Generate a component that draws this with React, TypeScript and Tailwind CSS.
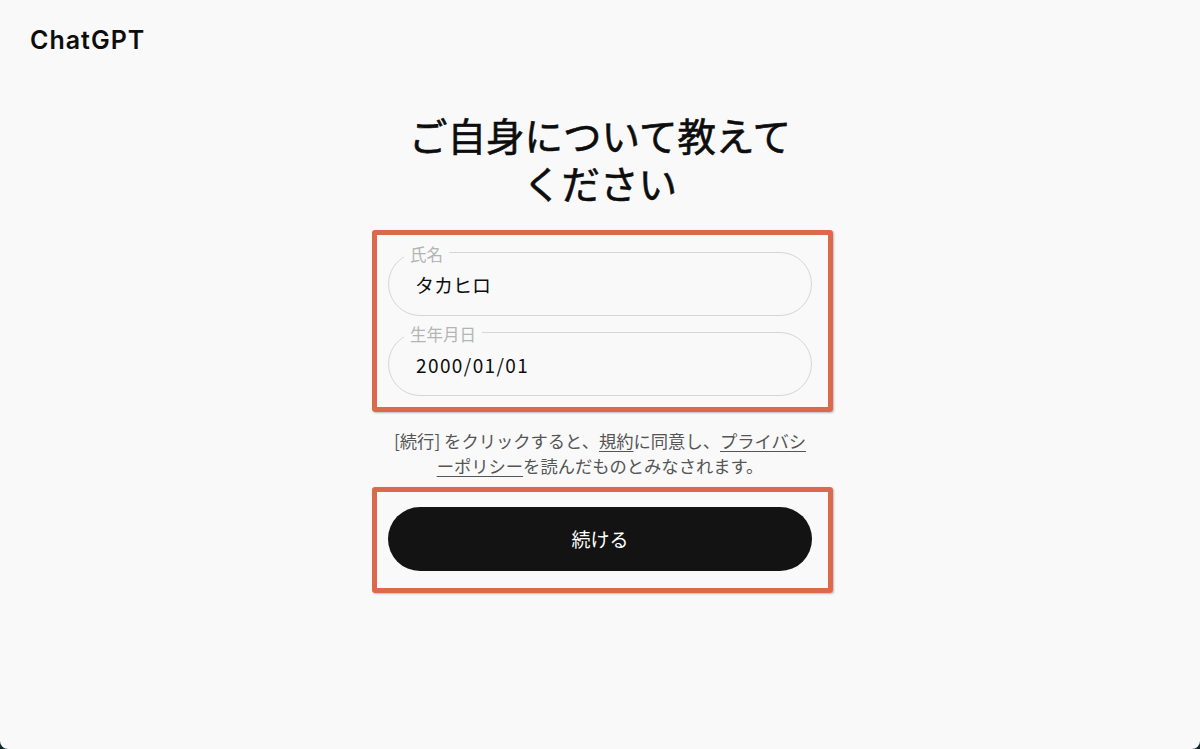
import React from "react";

const jp = { fontFamily: '"Noto Sans CJK JP", "Noto Sans", sans-serif' };

function Field({ label, value, track }: { label: string; value: string; track?: boolean }) {
  return (
    <div className="relative h-16 w-full rounded-full border border-[#d6d6d6]">
      <span className="absolute -top-[9px] left-[15px] bg-[#f9f9f9] px-[6px] text-[16.5px] leading-5 text-[#b4b4b4]">
        {label}
      </span>
      <input
        readOnly
        value={value}
        className={
          track
            ? "h-full w-full rounded-full bg-transparent pl-[27px] pr-6 text-[19px] tracking-[1.4px] text-[#0d0d0d] outline-none"
            : "h-full w-full rounded-full bg-transparent pl-[26px] pr-6 text-[19px] text-[#0d0d0d] outline-none"
        }
      />
    </div>
  );
}

export default function App() {
  return (
    <div className="h-[749px] w-full bg-[#10282a]" style={jp}>
      <div className="flex h-full w-full flex-col rounded-b-[8px] bg-[#f9f9f9]">
        <header className="px-[30px] pt-6">
          <div
            className="text-[25px] font-semibold leading-8 tracking-[1px] text-[#0d0d0d]"
            style={{ fontFamily: 'Inter, "Liberation Sans", sans-serif' }}
          >
            ChatGPT
          </div>
        </header>
        <main className="flex flex-col items-center">
          <h1 className="mt-[54px] w-[410px] text-center text-[38.5px] font-normal leading-[48px] text-[#0d0d0d] [-webkit-text-stroke:0.6px_#0d0d0d]">
            ご自身について教えてください
          </h1>
          <div className="flex w-[424px] flex-col">
            <div className="-ml-[16px] -mr-[21px] mt-6 rounded-[3px] border-[5px] border-[#dc694b] pb-[11px] pl-[11px] pr-4 pt-[17px] shadow-[1px_1px_2px_rgba(0,0,0,0.25)]">
              <div className="flex flex-col gap-4">
                <Field label="氏名" value="タカヒロ" />
                <Field label="生年月日" value="2000/01/01" track />
              </div>
            </div>
            <p className="mt-4 whitespace-nowrap text-center text-[17.3px] leading-[25px] text-[#555555]">
              [続行] をクリックすると、<a className="underline underline-offset-[3px]">規約</a>に同意し、
              <a className="underline underline-offset-[3px]">
                プライバシ
                <br />
                ーポリシー
              </a>
              を読んだものとみなされます。
            </p>
            <div className="-ml-[16px] -mr-[21px] mt-[9px] rounded-[3px] border-[5px] border-[#dc694b] pb-[17px] pl-[11px] pr-4 pt-[15px] shadow-[1px_1px_2px_rgba(0,0,0,0.25)]">
              <button className="flex h-16 w-full items-center justify-center rounded-full bg-[#131313] text-[19px] font-normal text-white">
                続ける
              </button>
            </div>
          </div>
        </main>
      </div>
    </div>
  );
}
